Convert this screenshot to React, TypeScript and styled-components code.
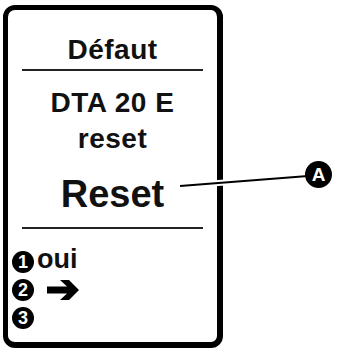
import React from "react";
import styled, { createGlobalStyle } from "styled-components";

const GlobalStyle = createGlobalStyle`
  html, body {
    margin: 0;
    padding: 0;
    background: #fff;
  }
  body {
    font-family: "Liberation Sans", Arial, sans-serif;
    color: #111;
  }
`;

const Page = styled.div`
  position: relative;
  width: 339px;
  height: 349px;
  overflow: hidden;
`;

const Frame = styled.div`
  box-sizing: border-box;
  margin: 5px 0 0 3px;
  width: 220px;
  height: 343px;
  border: 5px solid #000;
  border-right-width: 6px;
  border-bottom-width: 6px;
  border-radius: 12px;
  display: flex;
  flex-direction: column;
`;

const Title = styled.div`
  padding-top: 26px;
  font-size: 28px;
  line-height: 1;
  font-weight: 700;
  letter-spacing: 0.5px;
  text-align: center;
`;

const Rule = styled.div<{ $top: number }>`
  height: 2px;
  margin: ${(p) => p.$top}px 14px 0;
  background: #222;
`;

const Message = styled.div`
  margin-top: 14px;
  font-size: 28px;
  line-height: 36px;
  font-weight: 700;
  letter-spacing: 0.5px;
  text-align: center;
`;

const Big = styled.div`
  margin-top: 18px;
  font-size: 38px;
  line-height: 1;
  font-weight: 700;
  text-align: center;
`;

const List = styled.div`
  display: flex;
  flex-direction: column;
  gap: 6px;
  padding: 22px 0 0 4px;
`;

const Row = styled.div`
  display: flex;
  align-items: center;
  height: 22px;
  gap: 3px;
`;

const Num = styled.span`
  display: inline-flex;
  align-items: center;
  justify-content: center;
  width: 22px;
  height: 22px;
  border-radius: 50%;
  background: #000;
  color: #fff;
  font-size: 18px;
  font-weight: 700;
  line-height: 1;
`;

const Label = styled.span`
  font-size: 27px;
  font-weight: 700;
  line-height: 1;
  margin-top: -6px;
`;

const Arrow = styled.svg`
  margin-left: 10px;
`;

const Callout = styled.svg`
  position: absolute;
  left: 0;
  top: 0;
  pointer-events: none;
`;

const Badge = styled.div`
  position: absolute;
  left: 305px;
  top: 161px;
  width: 27px;
  height: 27px;
  border-radius: 50%;
  background: #000;
  color: #fff;
  display: flex;
  align-items: center;
  justify-content: center;
  font-size: 19px;
  font-weight: 700;
`;

function App() {
  return (
    <Page>
      <GlobalStyle />
      <Frame>
        <Title>Défaut</Title>
        <Rule $top={5} />
        <Message>
          DTA 20 E
          <br />
          reset
        </Message>
        <Big>Reset</Big>
        <Rule $top={14} />
        <List>
          <Row>
            <Num>1</Num>
            <Label>oui</Label>
          </Row>
          <Row>
            <Num>2</Num>
            <Arrow width="34" height="24" viewBox="0 0 34 24">
              <path d="M0 8.5 H20 L13 2 H22 L32 12 L22 22 H13 L20 15.5 H0 Z" fill="#000" />
            </Arrow>
          </Row>
          <Row>
            <Num>3</Num>
          </Row>
        </List>
      </Frame>
      <Callout width="339" height="349" viewBox="0 0 339 349">
        <line x1="180" y1="186" x2="308" y2="176" stroke="#fff" strokeWidth="6" />
        <line x1="180" y1="186" x2="308" y2="176" stroke="#000" strokeWidth="2" />
      </Callout>
      <Badge>A</Badge>
    </Page>
  );
}

export default App;
